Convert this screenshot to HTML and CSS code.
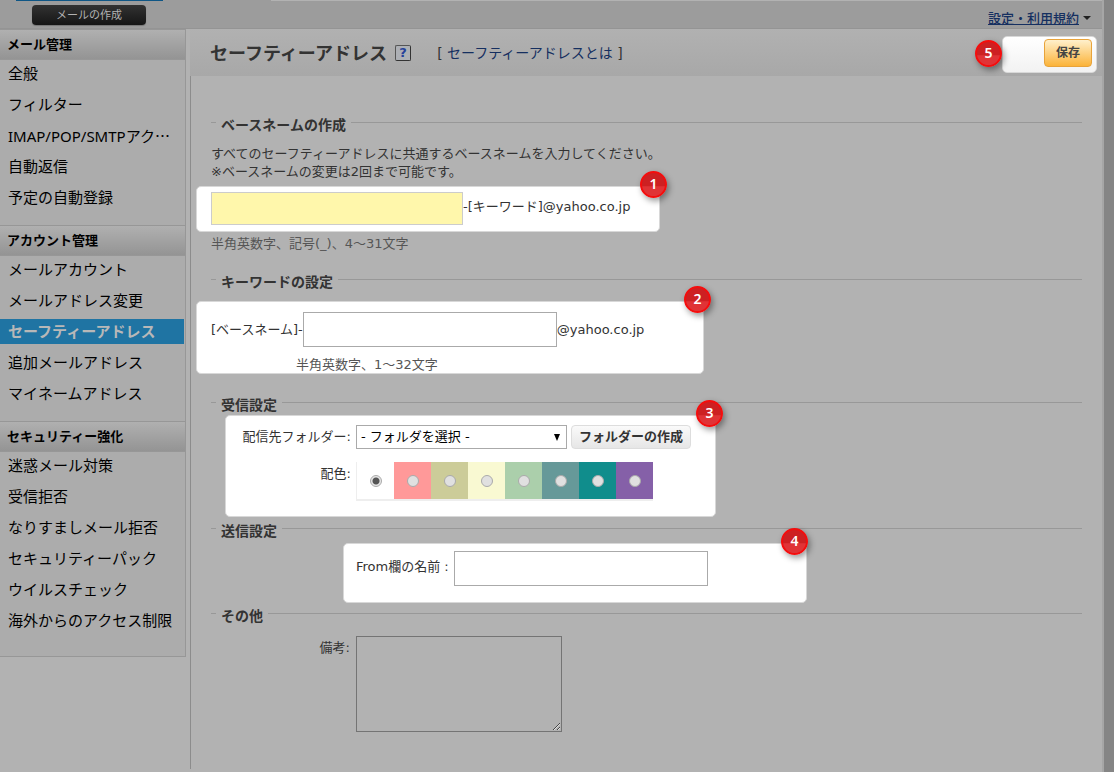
FILE: index.html
```html
<!DOCTYPE html>
<html lang="ja">
<head>
<meta charset="utf-8">
<title>セーフティーアドレス</title>
<link rel="stylesheet" href="styles.css">
</head>
<body>
<div class="app">
  <header class="topbar">
    <div class="tabs"><span class="tab-active"></span><span class="tab-rest"></span></div>
    <button class="compose" type="button">メールの作成</button>
    <a class="settings" href="#">設定・利用規約</a>
    <svg class="caret" viewBox="0 0 8 4" width="8" height="4" aria-hidden="true"><path d="M0 0h8L4 4z" fill="#222"/></svg>
  </header>
  <div class="body">
    <nav class="sidebar">
      <h2>メール管理</h2>
      <ul>
        <li><a href="#">全般</a></li>
        <li><a href="#">フィルター</a></li>
        <li><a href="#">IMAP/POP/SMTPアク<span class="dots">…</span></a></li>
        <li><a href="#">自動返信</a></li>
        <li><a href="#">予定の自動登録</a></li>
      </ul>
      <h2>アカウント管理</h2>
      <ul>
        <li><a href="#">メールアカウント</a></li>
        <li><a href="#">メールアドレス変更</a></li>
        <li><a class="current" href="#">セーフティーアドレス</a></li>
        <li><a href="#">追加メールアドレス</a></li>
        <li><a href="#">マイネームアドレス</a></li>
      </ul>
      <h2>セキュリティー強化</h2>
      <ul>
        <li><a href="#">迷惑メール対策</a></li>
        <li><a href="#">受信拒否</a></li>
        <li><a href="#">なりすましメール拒否</a></li>
        <li><a href="#">セキュリティーパック</a></li>
        <li><a href="#">ウイルスチェック</a></li>
        <li><a href="#">海外からのアクセス制限</a></li>
      </ul>
    </nav>
    <main class="main">
      <div class="title-bar">
        <h1>セーフティーアドレス</h1>
        <a class="help" href="#">?</a>
        <p class="about">[ <a href="#">セーフティーアドレスとは</a> ]</p>
        <div class="spot spot-save">
          <button class="save" type="submit" form="settings">保存</button>
          <span class="badge badge-left">5</span>
        </div>
      </div>
      <form class="form" id="settings">
        <fieldset>
          <legend>ベースネームの作成</legend>
          <p class="lead">すべてのセーフティーアドレスに共通するベースネームを入力してください。<br>※ベースネームの変更は2回まで可能です。</p>
          <div class="spot spot-base">
            <input class="text base-input" id="base" type="text">
            <label for="base">-[キーワード]@yahoo.co.jp</label>
            <span class="badge">1</span>
          </div>
          <p class="hint">半角英数字、記号(_)、4～31文字</p>
        </fieldset>
        <fieldset>
          <legend>キーワードの設定</legend>
          <div class="spot spot-keyword">
            <div class="line">
              <label for="keyword">[ベースネーム]-</label>
              <input class="text" id="keyword" type="text">
              <span>@yahoo.co.jp</span>
            </div>
            <p class="hint hint-indent">半角英数字、1～32文字</p>
            <span class="badge">2</span>
          </div>
        </fieldset>
        <fieldset>
          <legend>受信設定</legend>
          <div class="spot spot-receive">
            <label class="field-label" for="folder">配信先フォルダー:</label>
            <div class="line line-gap">
              <span class="select-wrap">
                <select id="folder"><option>- フォルダを選択 -</option></select>
                <svg class="select-arrow" viewBox="0 0 6 7" width="6" height="7" aria-hidden="true"><path d="M0 0h6L3 7z" fill="#000"/></svg>
              </span>
              <button class="make-folder" type="button">フォルダーの作成</button>
            </div>
            <span class="field-label" id="color-label">配色:</span>
            <div class="swatches" role="radiogroup" aria-labelledby="color-label">
              <label class="swatch white"><input type="radio" name="color" aria-label="白" checked></label>
              <label class="swatch pink"><input type="radio" name="color" aria-label="ピンク"></label>
              <label class="swatch khaki"><input type="radio" name="color" aria-label="カーキ"></label>
              <label class="swatch cream"><input type="radio" name="color" aria-label="クリーム"></label>
              <label class="swatch green"><input type="radio" name="color" aria-label="緑"></label>
              <label class="swatch slate"><input type="radio" name="color" aria-label="青緑"></label>
              <label class="swatch teal"><input type="radio" name="color" aria-label="ティール"></label>
              <label class="swatch purple"><input type="radio" name="color" aria-label="紫"></label>
            </div>
            <span class="badge">3</span>
          </div>
        </fieldset>
        <fieldset>
          <legend>送信設定</legend>
          <div class="spot spot-send">
            <label for="from">From欄の名前 :</label>
            <input class="text" id="from" type="text">
            <span class="badge badge-inset">4</span>
          </div>
        </fieldset>
        <fieldset>
          <legend>その他</legend>
          <div class="note">
            <label class="field-label" for="note">備考:</label>
            <textarea id="note"></textarea>
          </div>
        </fieldset>
      </form>
    </main>
  </div>
</div>
</body>
</html>
```
FILE: styles.css
```css
* { box-sizing: border-box; }

body {
  margin: 0;
  padding-right: 10px;
  background: #858585;
  color: #333;
  font: 13px/18px "Noto Sans", "Noto Sans CJK JP", sans-serif;
}

h1, h2, p, ul { margin: 0; padding: 0; }
input, select, textarea, button { margin: 0; font: inherit; }

.app {
  display: flex;
  flex-direction: column;
  min-height: 100vh;
  border-right: 2px solid #a6a6a6;
  background: #b2b2b2;
}

/* Top bar */
.topbar {
  position: relative;
  display: flex;
  align-items: center;
  height: 29px;
  padding: 2px 11px 0 32px;
  border-bottom: 1px solid #949494;
  background: #9c9c9c;
}
.tabs {
  position: absolute;
  inset: 0 0 auto;
  display: flex;
  justify-content: space-between;
  height: 1px;
  padding-left: 16px;
}
.tab-active { width: 147px; background: #0f5685; }
.tab-rest { width: calc(100% - 255px); background: #b2b2b2; }
.compose {
  width: 114px;
  height: 20px;
  padding: 0;
  border: 0;
  border-radius: 4px;
  background: linear-gradient(#323232, #161616);
  box-shadow: 0 1px 1px #777;
  color: #b2b2b2;
  font-size: 11px;
}
.settings {
  margin-left: auto;
  padding-top: 5px;
  color: #152f60;
  font-weight: 500;
}
.caret { margin: 6px 0 0 4px; }

.body { display: flex; flex: 1; align-items: flex-start; }

/* Sidebar */
.sidebar {
  flex: none;
  width: 186px;
  margin-right: 4px;
  border: solid #979797;
  border-width: 0 1px 1px 0;
  background: #acacac;
  color: #000;
}
.sidebar h2 {
  height: 31px;
  padding: 0 7px;
  border: solid #979797;
  border-width: 1px 0;
  background: linear-gradient(#b0b0b0, #949494);
  font-size: 13px;
  line-height: 29px;
}
.sidebar ul {
  display: flex;
  flex-direction: column;
  gap: 6px;
  padding: 1px 1px 15px 0;
  list-style: none;
}
.sidebar ul:last-child { padding-bottom: 23px; }
.sidebar a {
  display: block;
  height: 25px;
  padding-left: 8px;
  color: #000;
  font-size: 15px;
  line-height: 25px;
  text-decoration: none;
  white-space: nowrap;
}
.sidebar .current { background: #1f74a3; color: #b8b8b8; font-weight: 700; }
.dots { font-family: "Noto Sans CJK JP", sans-serif; }

/* Title bar */
.main {
  flex: 1;
  align-self: stretch;
  min-width: 0;
  margin-bottom: 3px;
  border-left: 1px solid #8c8c8c;
}
.title-bar {
  display: flex;
  align-items: center;
  height: 47px;
  margin-left: -1px;
  padding: 0 5px 0 20px;
  background: linear-gradient(#b1b1b1, #a8a8a8);
}
h1 { font-size: 18px; line-height: 24px; }
.help {
  width: 16px;
  height: 16px;
  margin-left: 8px;
  border: 1px solid #555;
  border-right-color: #333;
  border-bottom-color: #333;
  border-radius: 2px;
  background: #adb0b5;
  color: #25419a;
  font: bold 13px/14px "DejaVu Sans", sans-serif;
  text-align: center;
  text-decoration: none;
}
.about {
  margin-left: 26px;
  font-family: "DejaVu Sans", "Noto Sans CJK JP", sans-serif;
  font-size: 14px;
}
.about a { color: #152f60; text-decoration: none; }

/* Highlighted areas and their numbers */
.spot {
  position: relative;
  max-width: 100%;
  border: 1px solid #d8d8d8;
  border-radius: 5px;
  background: #fff;
}
.badge {
  position: absolute;
  top: -16px;
  right: -8px;
  width: 27px;
  height: 27px;
  border: 2px solid #f40d0d;
  border-radius: 50%;
  background: linear-gradient(#cd2022 55%, #e03336 60%);
  box-shadow: 2px 3px 6px rgba(0, 0, 0, .4);
  color: #fff;
  font: 600 14px/22px "Noto Sans", sans-serif;
  text-align: center;
}
.badge-inset { right: -2px; }
.badge-left { top: 3px; right: auto; left: -28px; }
.spot-save {
  display: flex;
  justify-content: flex-end;
  width: 95px;
  height: 37px;
  margin: 4px 0 0 auto;
  padding: 2px 4px;
  background: linear-gradient(#fff, #f2f2f2);
}
.save {
  width: 48px;
  height: 28px;
  padding: 0;
  border: 1px solid #e8a33a;
  border-radius: 4px;
  background: linear-gradient(#fff0cc, #fbb339);
  color: #444;
  font-size: 12px;
  font-weight: 700;
}

/* Form */
.form {
  padding: 35px 20px 20px;
  font-family: "DejaVu Sans", "Noto Sans CJK JP", sans-serif;
}
fieldset {
  min-width: 0;
  margin: 0;
  padding: 0 0 15px;
  border: 0;
  border-top: 1px solid #989898;
}
legend {
  margin-left: 5px;
  padding: 5px 5px 0;
  font-size: 14px;
  font-weight: 700;
}
.lead { padding-top: 11px; }
.hint { padding-top: 3px; color: #555; }
.text {
  width: 254px;
  height: 35px;
  border: 1px solid #aaa;
  background: #fff;
}
.line { display: flex; align-items: center; }
.line-gap { gap: 4px; }
.spot-base {
  display: flex;
  align-items: flex-start;
  width: 464px;
  height: 46px;
  margin: 5px 0 0 -15px;
  padding: 5px 14px;
}
.spot-base label { padding-top: 6px; }
.base-input { width: 252px; height: 33px; border-color: #ccc; background: #fff7ab; }
.spot-keyword {
  width: 508px;
  height: 73px;
  margin: 10px 0 2px -15px;
  padding: 10px 14px 0;
}
.hint-indent { padding: 9px 0 0 85px; }
.spot-receive {
  display: grid;
  grid-template-columns: 125px auto;
  column-gap: 5px;
  row-gap: 13px;
  align-content: start;
  justify-content: start;
  width: 491px;
  height: 102px;
  margin: 1px 0 -15px 14px;
  padding: 9px 0;
}
.field-label { padding-top: 3px; text-align: right; }
.select-wrap { position: relative; display: flex; }
select {
  width: 211px;
  height: 24px;
  padding: 0 4px;
  border: 1px solid #aaa;
  appearance: none;
  background: #fff;
  color: #000;
}
.select-arrow { position: absolute; top: 9px; right: 7px; pointer-events: none; }
.make-folder {
  width: 120px;
  height: 24px;
  padding: 0;
  border: 1px solid #ddd;
  border-radius: 4px;
  background: linear-gradient(#fafafa, #e6e6e6);
  color: #333;
  font-weight: 700;
}
.swatches {
  display: flex;
  justify-self: start;
  border: solid #eee;
  border-width: 0 0 2px 1px;
}
.swatch { display: flex; align-items: center; justify-content: center; width: 37px; height: 37px; }
.white { background: #fff; }
.pink { background: #ff9999; }
.khaki { background: #cccc99; }
.cream { background: #f9f9d2; }
.green { background: #abcfab; }
.slate { background: #669999; }
.teal { background: #108d8c; }
.purple { background: #8560a8; }
.swatch input {
  width: 12px;
  height: 12px;
  border: 1px solid #aaa;
  border-radius: 50%;
  appearance: none;
  background: #e0e0e0;
}
.swatch input:checked { background: radial-gradient(circle, #555 0 3px, #e6e6e6 4px); }
.spot-send {
  display: flex;
  align-items: flex-start;
  justify-content: space-between;
  width: 464px;
  height: 60px;
  margin: 3px 0 -16px 132px;
  padding: 7px 98px 0 12px;
}
.spot-send label { padding-top: 7px; }
.note {
  display: grid;
  grid-template-columns: 139px auto;
  column-gap: 6px;
  justify-content: start;
  padding-top: 11px;
}
textarea {
  width: 206px;
  height: 96px;
  border: 1px solid #747474;
  background: #b2b2b2;
}
```
